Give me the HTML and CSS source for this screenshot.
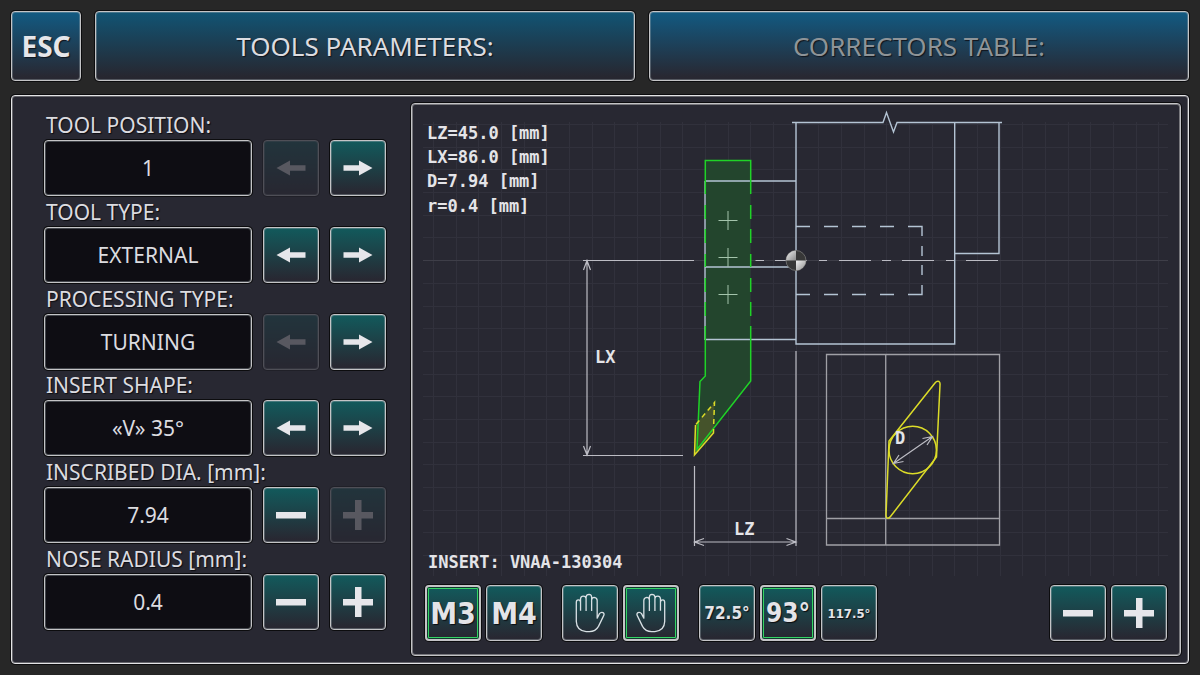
FILE: index.html
```html
<!DOCTYPE html>
<html lang="en">
<head>
<meta charset="utf-8">
<title>Tools parameters</title>
<link rel="stylesheet" href="styles.css">
</head>
<body>
<svg class="defs" aria-hidden="true">
  <symbol id="arrow-left" viewBox="0 0 30 30"><path d="M0.5 15 14 7.5V12.200H29.500V17.800H14V22.500Z"/></symbol>
  <symbol id="arrow-right" viewBox="0 0 30 30"><path d="M29.500 15 16 7.500V12.200H0.500V17.800H16V22.500Z"/></symbol>
  <symbol id="minus" viewBox="0 0 30 30"><path d="M0 12H30V18.500H0Z"/></symbol>
  <symbol id="plus" viewBox="0 0 30 30"><path d="M12 0H18.500V12H30V18.500H18.500V30H12V18.500H0V12H12Z"/></symbol>
  <symbol id="hand" viewBox="494 160 92 120">
    <path class="hand-line" d="M498 246V188Q498 180 504 180Q511 180 511 188V213M511 190V176Q512 168 519 168Q528 168 528 176V214M528 176V171Q529 163 537 163Q545 164 545 171V214M545 180Q546 172 553 172Q562 173 562 182V236L569 222Q574 216 580 219Q585 222 582 228L566 261Q557 277 538 277H528Q499 274 498 246"/>
  </symbol>
</svg>

<nav class="topbar">
  <button class="tab tab-esc" type="button">ESC</button>
  <button class="tab tab-active" type="button">TOOLS PARAMETERS:</button>
  <button class="tab tab-idle" type="button">CORRECTORS TABLE:</button>
</nav>

<main class="panel">
  <form class="params">
    <div class="param">
      <label for="position">TOOL POSITION:</label>
      <div class="row">
        <input id="position" type="text" value="1" readonly>
        <button class="key" type="button" aria-label="Previous" disabled><svg class="icon"><use href="#arrow-left"/></svg></button>
        <button class="key" type="button" aria-label="Next"><svg class="icon"><use href="#arrow-right"/></svg></button>
      </div>
    </div>
    <div class="param">
      <label for="type">TOOL TYPE:</label>
      <div class="row">
        <input id="type" type="text" value="EXTERNAL" readonly>
        <button class="key" type="button" aria-label="Previous"><svg class="icon"><use href="#arrow-left"/></svg></button>
        <button class="key" type="button" aria-label="Next"><svg class="icon"><use href="#arrow-right"/></svg></button>
      </div>
    </div>
    <div class="param">
      <label for="processing">PROCESSING TYPE:</label>
      <div class="row">
        <input id="processing" type="text" value="TURNING" readonly>
        <button class="key" type="button" aria-label="Previous" disabled><svg class="icon"><use href="#arrow-left"/></svg></button>
        <button class="key" type="button" aria-label="Next"><svg class="icon"><use href="#arrow-right"/></svg></button>
      </div>
    </div>
    <div class="param">
      <label for="shape">INSERT SHAPE:</label>
      <div class="row">
        <input id="shape" type="text" value="«V» 35°" readonly>
        <button class="key" type="button" aria-label="Previous"><svg class="icon"><use href="#arrow-left"/></svg></button>
        <button class="key" type="button" aria-label="Next"><svg class="icon"><use href="#arrow-right"/></svg></button>
      </div>
    </div>
    <div class="param">
      <label for="diameter">INSCRIBED DIA. [mm]:</label>
      <div class="row">
        <input id="diameter" type="text" value="7.94" readonly>
        <button class="key" type="button" aria-label="Decrease"><svg class="icon"><use href="#minus"/></svg></button>
        <button class="key" type="button" aria-label="Increase" disabled><svg class="icon"><use href="#plus"/></svg></button>
      </div>
    </div>
    <div class="param">
      <label for="radius">NOSE RADIUS [mm]:</label>
      <div class="row">
        <input id="radius" type="text" value="0.4" readonly>
        <button class="key" type="button" aria-label="Decrease"><svg class="icon"><use href="#minus"/></svg></button>
        <button class="key" type="button" aria-label="Increase"><svg class="icon"><use href="#plus"/></svg></button>
      </div>
    </div>
  </form>

  <section class="stage">
    <svg class="drawing" viewBox="412 104 768 481" role="img" aria-label="Tool drawing">
      <defs>
        <linearGradient id="ball-light" x1="0" y1="0" x2="1" y2="1">
          <stop offset="0" stop-color="#f2f2f2"/><stop offset="1" stop-color="#8c8c8c"/>
        </linearGradient>
      </defs>
      <path class="grid" d="M433.500 122V576M456.500 122V576M478.500 122V576M501.500 122V576M524.500 122V576M546.500 122V576M569.500 122V576M592.500 122V576M614.500 122V576M637.500 122V576M660.500 122V576M682.500 122V576M705.500 122V576M728.500 122V576M750.500 122V576M773.500 122V576M796.500 122V576M818.500 122V576M841.500 122V576M864.500 122V576M886.500 122V576M909.500 122V576M932.500 122V576M954.500 122V576M977.500 122V576M1000.500 122V576M1022.500 122V576M1045.500 122V576M1068.500 122V576M1090.500 122V576M1113.500 122V576M1136.500 122V576M1158.500 122V576"/>
      <path class="grid" d="M423 124.500H1168M423 147.500H1168M423 169.500H1168M423 192.500H1168M423 215.500H1168M423 237.500H1168M423 283.500H1168M423 306.500H1168M423 328.500H1168M423 351.500H1168M423 374.500H1168M423 396.500H1168M423 419.500H1168M423 442.500H1168M423 464.500H1168M423 487.500H1168M423 510.500H1168M423 532.500H1168M423 555.500H1168"/>
      <path class="grid grid-axis" d="M423 260.500H1168"/>

      <path class="holder-fill" d="M705.500 160.500H750.500V381L697 450 700 381.500 705.500 376Z"/>
      <path class="insert-fill" d="M695 425 714.500 402.500 713.500 433 694.500 455Z"/>

      <path class="part" d="M792 122.500H883L886.500 112.500 893.500 132 897 122.500H1002"/>
      <path class="part" d="M796 122V344H954.700V122M999 122V253.500H955M705 181H796M705 267H796M705 339.500H796M705 181V340"/>
      <path class="part" d="M796 226.500H810M824 226.500H838M852 226.500H866M880 226.500H894M908 226.500H922V236M922 246V256M922 265V275M922 285V294.500H908M796 294.500H810M824 294.500H838M852 294.500H866M880 294.500H894"/>
      <path class="dim" d="M755.500 260.500H764M775 260.500H807M819 260.500H827M839 260.500H871M882 260.500H891M902 260.500H934M946 260.500H954M966 260.500H998"/>

      <path class="cross" d="M718.500 220.500H737.500M728 211V230M718.500 257.500H737.500M728 248V267M718.500 294.500H737.500M728 285V304"/>

      <path class="holder" d="M705.300 194V160.500H750.700V194M705.300 205V219M705.300 229V243M705.300 254V267M705.300 278V292M705.300 302V316M750.700 205V219M750.700 229V243M750.700 254V267M750.700 278V292M750.700 302V316M705.300 326V376L700 381.500 697 449.500 750.700 381V326"/>
      <path class="insert" d="M695.500 425 694.500 455 713.500 433 713.600 429"/>
      <path class="insert insert-hidden" d="M713.700 424 714.500 402.500 695.500 425"/>

      <path class="dim" d="M583 260.500H694M587 260.500V455M583 455.500H683M583.500 270 587 260.500 590.500 270M583.500 446 587 455 590.500 446"/>
      <path class="dim" d="M694.500 466V546M796 351V546M694.500 542H796M704 538.500 694.500 542 704 545.500M786.500 538.500 796 542 786.500 545.500"/>

      <circle cx="796" cy="260.500" r="10" fill="#383838" stroke="#6a6a6a"/>
      <path d="M796 260.500H786A10 10 0 0 1 796 250.500Z" fill="url(#ball-light)"/>
      <path d="M796 260.500H806A10 10 0 0 1 796 270.500Z" fill="url(#ball-light)"/>

      <path class="frame" d="M826.500 354.500H999.500V545H826.500ZM885.700 354.500V545M826.500 518.500H999.500"/>
      <path class="insert" d="M889 441 935 383Q937 380.500 939 381.500 940.300 382.500 940 385L936.500 457 890.500 516.500Q888.500 519 887 518 886 517 886 515Z"/>
      <circle class="insert" cx="912.700" cy="450" r="23.700"/>
      <path class="dim" d="M893.500 463.500 932.500 436.500M903.500 461.500 893.500 463.500 899 455M922.500 438.500 932.500 436.500 927 445"/>

      <g class="readout">
        <text x="427" y="139">LZ=45.0 [mm]</text>
        <text x="427" y="163">LX=86.0 [mm]</text>
        <text x="427" y="187">D=7.94 [mm]</text>
        <text x="427" y="212">r=0.4 [mm]</text>
        <text x="595" y="363">LX</text>
        <text x="734" y="535">LZ</text>
        <text x="895" y="444">D</text>
        <text x="428" y="568">INSERT: VNAA-130304</text>
      </g>
    </svg>

    <div class="toolbar">
      <div class="group">
        <button class="key key-on text-large" type="button" aria-pressed="true">M3</button>
        <button class="key text-large" type="button">M4</button>
      </div>
      <div class="group">
        <button class="key" type="button" aria-label="Left hand"><svg class="icon-hand"><use href="#hand"/></svg></button>
        <button class="key key-on" type="button" aria-label="Right hand" aria-pressed="true"><svg class="icon-hand mirrored"><use href="#hand"/></svg></button>
      </div>
      <div class="group">
        <button class="key text-small" type="button">72.5°</button>
        <button class="key key-on text-medium" type="button" aria-pressed="true">93°</button>
        <button class="key text-tiny" type="button">117.5°</button>
      </div>
      <div class="group group-end">
        <button class="key" type="button" aria-label="Zoom out"><svg class="icon"><use href="#minus"/></svg></button>
        <button class="key" type="button" aria-label="Zoom in"><svg class="icon"><use href="#plus"/></svg></button>
      </div>
    </div>
  </section>
</main>
</body>
</html>
```
FILE: styles.css
```css
* {
  box-sizing: border-box;
}

body {
  display: flex;
  flex-direction: column;
  gap: 14px;
  min-height: 100vh;
  margin: 0;
  padding: 11px;
  background: #272727;
  color: #dcdce0;
  font-family: "Noto Sans", sans-serif;
}

.defs {
  display: none;
}

button,
input {
  margin: 0;
  padding: 0;
  border: 1px solid #c4c4c6;
  border-radius: 4px;
  box-shadow: 0 0 0 1px #0c0c0e, inset 0 0 0 1px rgba(170, 180, 185, 0.35);
  color: inherit;
  font-family: inherit;
  text-align: center;
}

.topbar {
  display: flex;
  gap: 14px;
}

.tab {
  flex: 1;
  height: 70px;
  background: linear-gradient(#125a82, #282832 95%);
  font-size: 26px;
  text-shadow: 1px 1px 1px #10141c;
}

.tab-esc {
  flex: 0 0 70px;
  color: #e6e6ea;
  font-size: 28px;
  font-weight: 700;
}

.tab-active {
  background: linear-gradient(#115474, #272730 95%);
}

.tab-idle {
  color: #8e9498;
}

.panel {
  display: flex;
  flex: 1;
  gap: 25px;
  padding: 7px 7px 7px 32px;
  border: 1px solid #e4e4e6;
  border-radius: 4px;
  background: #282832;
  box-shadow: 0 0 0 1px #0c0c0e, inset 0 0 0 1px #66666c;
}

.params {
  display: flex;
  flex: 0 0 342px;
  flex-direction: column;
  justify-content: space-between;
  min-width: 0;
  padding: 7px 0 26px;
}

.param label {
  display: block;
  padding-left: 2px;
  font-size: 21px;
  line-height: 30px;
  text-shadow: 1px 1px 1px #0c0c10;
}

.row {
  display: flex;
  gap: 11px;
}

.row input {
  flex: 1;
  min-width: 0;
  height: 56px;
  background: #0e0d13;
  font-size: 21px;
}

.key {
  display: flex;
  flex: 0 0 56px;
  align-items: center;
  justify-content: center;
  height: 56px;
  background: linear-gradient(#125a5c, #282832 95%);
  color: #e4e4e8;
  font-family: "DejaVu Sans Condensed", "DejaVu Sans", sans-serif;
  font-weight: 700;
  text-shadow: 1px 1px 1px #0c0c10;
}

.key:disabled {
  opacity: 0.25;
}

.key-on {
  border: 2px solid #c4c4c6;
  box-shadow: 0 0 0 1px #0c0c0e, inset 0 0 0 1px #0e3a2c, inset 0 0 0 2px #35d465;
}

.text-large {
  font-size: 30px;
}

.text-medium {
  font-size: 26px;
}

.text-small {
  font-size: 17px;
}

.text-tiny {
  font-size: 13px;
}

.icon {
  width: 30px;
  height: 30px;
  fill: #e6e6ea;
}

.icon-hand {
  width: 30px;
  height: 40px;
}

.hand-line {
  fill: none;
  stroke: #d8e0e4;
  stroke-width: 4;
  stroke-linejoin: round;
}

.mirrored {
  transform: scaleX(-1);
}

.stage {
  display: flex;
  flex: 1;
  flex-direction: column;
  min-width: 0;
  border: 1px solid #c4c4c6;
  border-radius: 4px;
  box-shadow: 0 0 0 1px #0c0c0e, inset 0 0 0 1px #77777c;
}

.drawing {
  flex: 1;
  width: 100%;
  min-height: 0;
  fill: none;
}

.grid {
  stroke: #31313c;
}

.grid-axis {
  stroke: #3e3e48;
}

.part {
  stroke: #b4c4d4;
  stroke-width: 1.4;
}

.dim {
  stroke: #bcbcc4;
  stroke-width: 1.2;
}

.frame {
  stroke: #a0a0a6;
  stroke-width: 1.3;
}

.cross {
  stroke: #a4c4ac;
}

.holder-fill {
  fill: #23452d;
}

.insert-fill {
  fill: #45532b;
}

.holder {
  stroke: #1fd327;
  stroke-width: 1.5;
}

.insert {
  stroke: #dcdc28;
  stroke-width: 1.5;
}

.insert-hidden {
  stroke-dasharray: 5 4;
}

.readout {
  fill: #e4e4e8;
  font-family: "DejaVu Sans Mono", monospace;
  font-size: 17px;
  font-weight: 700;
}

.toolbar {
  display: flex;
  gap: 20px;
  padding: 0 13px 14px;
}

.group {
  display: flex;
  gap: 5px;
}

.group-end {
  margin-left: auto;
}
```
